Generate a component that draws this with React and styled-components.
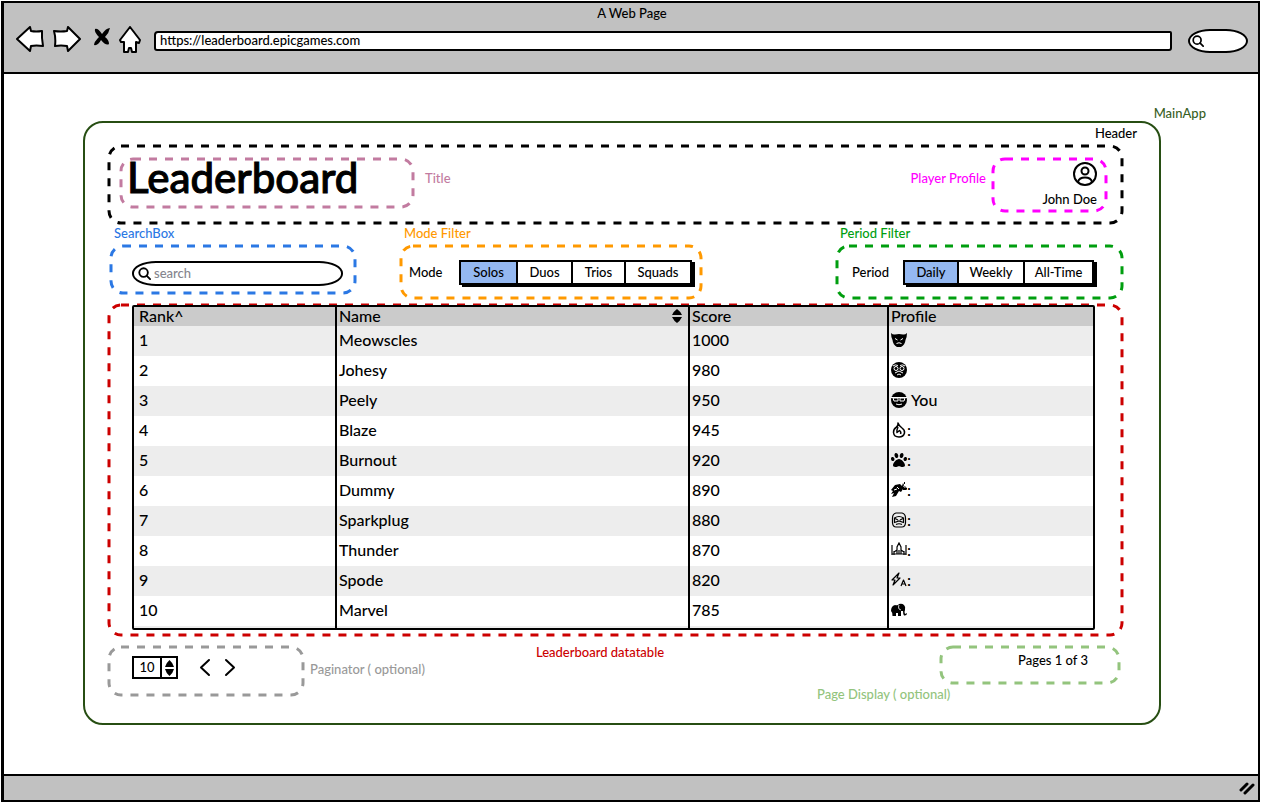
import React, { useState } from "react";
import styled, { createGlobalStyle } from "styled-components";
import { FaPaw } from "react-icons/fa";

const GlobalStyle = createGlobalStyle`
  *, *::before, *::after { box-sizing: border-box; }
  body {
    margin: 0;
    background: #fff;
    color: #000;
    font-family: Lato, "Liberation Sans", sans-serif;
    font-weight: 500;
    font-size: 13px;
    line-height: 16px;
  }
  button, input { font: inherit; color: inherit; }
  svg { display: block; }
`;

const Window = styled.div`
  display: flex;
  flex-direction: column;
  min-height: calc(100vh - 2px);
  margin: 1px 1px 0;
  border: 2px solid #000;
  border-left-width: 3px;
`;

const Chrome = styled.header`
  background: #c1c1c1;
  border-bottom: 2px solid #000;
  padding: 2px 10px 17px 12px;
`;

const PageTitle = styled.div`
  text-align: center;
  height: 16px;
`;

const NavRow = styled.nav`
  display: flex;
  align-items: center;
  height: 32px;
  margin-top: 2px;
`;

const IconButton = styled.button`
  display: flex;
  flex: none;
  padding: 0;
  border: 0;
  background: none;
  margin-right: ${(p) => p.$gap || 0}px;
`;

const AddressBar = styled.input`
  flex: 1;
  min-width: 0;
  height: 20px;
  margin: 4px 16px 0 13px;
  padding: 0 4px 2px;
  border: 2px solid #000;
  border-radius: 4px 2px 3px 3px;
  background: #fff;
  outline: 0;
`;

const Pill = styled.label`
  display: flex;
  align-items: center;
  border: 2px solid #000;
  background: #fff;
`;

const BrowserSearch = styled(Pill)`
  width: 60px;
  height: 24px;
  margin-top: 4px;
  padding-left: 2px;
  border-radius: 22px / 12px;
`;

const SearchField = styled(Pill)`
  height: 25px;
  padding-left: 4px;
  border-radius: 24px / 12px;
`;

const BareInput = styled.input`
  flex: 1;
  min-width: 0;
  width: 100%;
  padding: 0 0 2px 3px;
  border: 0;
  background: none;
  outline: 0;
  &::placeholder { color: #85858d; opacity: 1; }
`;

const Body = styled.main`
  flex: 1;
  padding: 31px 52px 32px 79px;
`;

const Note = styled.div`
  color: ${(p) => p.$color || "#000"};
  white-space: nowrap;
`;

const MainNote = styled(Note)`
  text-align: right;
`;

const AppPanel = styled.section`
  margin-right: 45px;
  border: 2px solid #274e13;
  border-radius: 20px;
  padding: 2px 0 21px;
`;

const HeaderNote = styled(Note)`
  text-align: right;
  padding-right: 22px;
`;

const Content = styled.div`
  padding: 5px 37px 0 24px;
`;

const Frame = styled.div`
  position: relative;
`;

const Outline = styled.svg`
  position: absolute;
  inset: 0;
  width: 100%;
  height: 100%;
  overflow: visible;
  pointer-events: none;
`;

function Dashes({ color }) {
  return (
    <Outline aria-hidden="true">
      <rect width="100%" height="100%" rx="12" fill="none" stroke={color} strokeWidth="3" strokeDasharray="8 8" />
    </Outline>
  );
}

const HeaderFrame = styled(Frame)`
  display: flex;
  align-items: flex-start;
  padding: 13px 16px 12px 12px;
`;

const TitleFrame = styled(Frame)`
  width: 292px;
  height: 48px;
  padding-left: 6px;
  margin-right: 12px;
`;

const Title = styled.h1`
  margin: 0;
  font-size: 42px;
  line-height: 36px;
  font-weight: 500;
  -webkit-text-stroke: 1px #000;
`;

const HeaderCaption = styled(Note)`
  margin-top: 11px;
  margin-left: ${(p) => (p.$end ? "auto" : "0")};
  margin-right: ${(p) => (p.$end ? "7px" : "0")};
`;

const ProfileFrame = styled(Frame)`
  display: flex;
  flex-direction: column;
  align-items: flex-end;
  gap: 5px;
  width: 113px;
  height: 52px;
  padding: 3px 9px 0 0;
`;

const FilterRow = styled.div`
  display: flex;
  align-items: flex-start;
  padding: 2px 0 7px 2px;
`;

const FilterSection = styled.section`
  display: flex;
  flex-direction: column;
  gap: 5px;
  width: ${(p) => p.$width}px;
  margin-left: ${(p) => p.$left || "0"};
`;

const FilterCaption = styled(Note)`
  padding-left: 3px;
`;

const FilterFrame = styled(Frame)`
  display: flex;
  align-items: flex-start;
  height: ${(p) => p.$height}px;
  padding: 14px ${(p) => p.$right}px 0 ${(p) => p.$left}px;
`;

const SearchFrame = styled(Frame)`
  height: 47px;
  padding: 15px 12px 0 21px;
`;

const FilterLabel = styled.span`
  flex: 1;
  padding-top: 4px;
`;

const Segments = styled.div`
  display: flex;
  border: 2px solid #000;
  background: #fff;
  box-shadow: 3px 2px 0 #000;
`;

const Segment = styled.button`
  height: 21px;
  width: ${(p) => p.$width}px;
  padding: 0 0 2px;
  border: 0;
  border-left: ${(p) => (p.$first ? "0" : "2px solid #000")};
  background: ${(p) => (p.$active ? "#94b8f1" : "#fff")};
`;

const TableFrame = styled(Frame)`
  padding: 0 27px 5px 23px;
`;

const TableBorder = styled.div`
  position: relative;
  border: 2px solid #000;
  border-radius: 2px;
  background: #fff;
`;

const Table = styled.table`
  width: 100%;
  table-layout: fixed;
  border-collapse: separate;
  border-spacing: 0;
  font-size: 16px;
`;

const Column = styled.col`
  width: ${(p) => (p.$width ? `${p.$width}px` : "auto")};
`;

const HeadCell = styled.th`
  height: 19px;
  padding: 0 6px 2px ${(p) => (p.$first ? 5 : 2)}px;
  border-right: ${(p) => (p.$last ? "0" : "2px solid #000")};
  background: #cbcbcb;
  text-align: left;
  font-weight: 500;
  line-height: 17px;
`;

const HeadContent = styled.div`
  display: flex;
  align-items: center;
  justify-content: space-between;
`;

const Row = styled.tr`
  background: ${(p) => (p.$striped ? "#ededed" : "#fff")};
`;

const Cell = styled.td`
  height: 30px;
  padding: 0 0 2px ${(p) => (p.$first ? 5 : 2)}px;
  border-right: ${(p) => (p.$last ? "0" : "2px solid #000")};
`;

const Spacer = styled.td`
  height: 2px;
  padding: 0;
  border-right: ${(p) => (p.$last ? "0" : "2px solid #000")};
`;

const ProfileValue = styled.span`
  display: flex;
  align-items: center;
  gap: ${(p) => (p.$spaced ? 4 : 0)}px;
`;

const Footer = styled.footer`
  display: flex;
  align-items: flex-start;
  padding-top: 9px;
`;

const PaginatorFrame = styled(Frame)`
  display: flex;
  align-items: flex-start;
  width: 194px;
  height: 48px;
  margin: 3px 7px 0 0;
  padding: 9px 0 0 23px;
`;

const Stepper = styled.div`
  display: flex;
  width: 46px;
  height: 23px;
  margin-right: 21px;
  border: 2px solid #000;
`;

const StepperInput = styled.input`
  width: 28px;
  padding: 0 0 1px;
  border: 0;
  border-right: 2px solid #000;
  text-align: center;
  outline: 0;
`;

const StepperButtons = styled.div`
  display: flex;
  flex: 1;
  flex-direction: column;
  align-items: center;
  justify-content: center;
  gap: 2px;
`;

const Pager = styled.div`
  display: flex;
  gap: 13px;
  padding-top: 2px;
`;

const PaginatorNote = styled(Note)`
  margin-top: 17px;
`;

const TableNote = styled(Note)`
  margin-left: 111px;
`;

const PageDisplay = styled.section`
  display: flex;
  flex-direction: column;
  align-items: flex-end;
  gap: 3px;
  width: 302px;
  margin: 3px 3px 0 auto;
`;

const PageFrame = styled(Frame)`
  width: 178px;
  height: 36px;
  padding: 5px 31px 0 0;
  text-align: right;
`;

const PageNote = styled(Note)`
  align-self: flex-start;
`;

const StatusBar = styled.div`
  display: flex;
  justify-content: flex-end;
  align-items: center;
  height: 26px;
  padding-right: 3px;
  border-top: 2px solid #000;
  background: #c1c1c1;
`;

const sketch = { stroke: "#000", strokeWidth: 2, strokeLinejoin: "round", strokeLinecap: "round" };

const BackArrow = () => (
  <svg width="28" height="26" viewBox="0 0 28 26" fill="#fff" {...sketch}>
    <path d="M1 13 14 1 15 5Q20 6 26 5L26 12 27 20Q20 19 15 20L14 25Z" />
  </svg>
);
const ForwardArrow = () => (
  <svg width="28" height="26" viewBox="0 0 28 26" fill="#fff" {...sketch}>
    <path d="M1 5Q8 6 14 5L15 1 27 13 15 25 14 20Q8 19 2 20 3 12 1 5Z" />
  </svg>
);
const StopCross = () => (
  <svg width="18" height="24" viewBox="0 0 18 24" fill="#000">
    <path d="M2 2Q5 1 9 7 13 1 17 1 16 6 12 10 16 13 16 17 13 19 8 13 5 19 1 18 1 15 6 10 1 5 2 2Z" />
  </svg>
);
const Home = () => (
  <svg width="22" height="27" viewBox="0 0 22 27" fill="#fff" {...sketch}>
    <path d="M11 1 21 14 20 17 17 16 17 26H13L12 22H10L9 26H5L5 16 2 16 1 14Z" />
  </svg>
);
const Magnifier = ({ size = 13 }) => (
  <svg width={size} height={size} viewBox="0 0 14 14" fill="none" stroke="#000" strokeWidth="2" strokeLinecap="round">
    <circle cx="6" cy="6" r="4.6" />
    <path d="M9.500 9.500 13 13" />
  </svg>
);
const Avatar = () => (
  <svg width="24" height="24" viewBox="0 0 24 24" fill="none" stroke="#000" strokeWidth="2">
    <circle cx="12" cy="12" r="11" />
    <circle cx="12" cy="9" r="3.500" />
    <path d="M5 20q1-4.500 7-4.500t7 4.500" />
  </svg>
);
const SortArrows = () => (
  <svg width="10" height="14" viewBox="0 0 10 14">
    <path d="M5 0q3 2 5 6H0q2-4 5-6ZM5 14q3-2 5-6H0q2 4 5 6Z" />
  </svg>
);
const StepArrow = ({ down }) => (
  <svg width="9" height="7" viewBox="0 0 9 7">
    <path d={down ? "M0 0h9q-1 4-4.500 7Q1 4 0 0Z" : "M0 7h9q-1-4-4.500-7Q1 3 0 7Z"} />
  </svg>
);
const Chevron = ({ right }) => (
  <svg width="12" height="19" viewBox="0 0 12 19" fill="none" {...sketch}>
    <path d={right ? "M2 2 10 9.500 2 17" : "M10 2 2 9.500 10 17"} />
  </svg>
);
const Grip = () => (
  <svg width="16" height="14" viewBox="0 0 16 14" fill="none" stroke="#000" strokeWidth="3" strokeLinecap="round">
    <path d="M2 9 8 3M6 12 14 4" />
  </svg>
);

const Glyph = styled.svg`
  flex: none;
  width: 16px;
  height: 16px;
`;

const Devil = () => (
  <Glyph viewBox="0 0 16 16">
    <path d="M0 1Q2 3 4 2.500 8 1.500 12 2.500 14 3 16 1 16 5 14.500 8 14 13 10 15H6Q2 13 1.500 8 0 5 0 1Z" />
    <path d="M4 6.500 6.500 8M12 6.500 9.500 8M5.500 11.500q2.500-1.500 5 0" fill="none" stroke="#fff" strokeWidth="1" />
  </Glyph>
);
const Surprised = () => (
  <Glyph viewBox="0 0 16 16">
    <circle cx="8" cy="8" r="8" />
    <g fill="none" stroke="#fff">
      <circle cx="5" cy="6.500" r="2" />
      <circle cx="11" cy="6.500" r="2" />
      <path d="M2 4q2-2 5-.5M14 4q-2-2-5-.5M4 11l4-2 4 2M6 13q2-2 4 0" />
    </g>
  </Glyph>
);
const Glasses = () => (
  <Glyph viewBox="0 0 16 16">
    <circle cx="8" cy="8" r="8" />
    <g fill="none" stroke="#fff">
      <path d="M0 5.500h16M2 6h5v3H3ZM9 6h5l-1 3H9ZM5 12q3 1.500 6 0" />
    </g>
  </Glyph>
);
const Flame = () => (
  <Glyph viewBox="0 0 16 16" fill="none" stroke="#000" strokeWidth="1.500" strokeLinejoin="round">
    <path d="M7 1Q8 4 11 6 14 8 13.500 11 12.500 15 8 15 3 15 2.500 10.500 2.500 7 5 5.500 7.500 4 7 1Z" />
    <path d="M7 5Q5.500 8 6 10.500L8.500 8.500Q10.500 10 9.500 12" />
  </Glyph>
);
const Strike = () => (
  <Glyph viewBox="0 0 16 16">
    <path d="M0 8 4 3l5-1 2 2 1-3 1 2-1 2 3-1-3 3-2 3-2-1-3 5-4 1 2-4-3 1 2-3Z" />
    <path d="M12 7h3M13 1l1 0M14 6l2 1" fill="none" stroke="#000" strokeWidth="2" />
    <path d="m3 8 3-1M6 5l2 2" stroke="#fff" />
  </Glyph>
);
const MaskFace = () => (
  <Glyph viewBox="0 0 16 16" fill="none" stroke="#000" strokeWidth="1.200">
    <path d="M5 1h6Q14.500 2 14.500 6V11Q14 15 11 15H5Q2 15 1.500 11V6Q1.500 2 5 1Z" />
    <path d="M3.500 6Q8 3 12.500 6V10.500L8 9 3.500 10.500ZM4 6.500 7 8M12 6.500 9 8M5 12.500q3-1.500 6 0" />
  </Glyph>
);
const Towers = () => (
  <Glyph viewBox="0 0 16 16" fill="none" stroke="#000" strokeWidth="1.200">
    <path d="M1 3V13M3 9V13M15 3V13M13 9V13M6 12V5L8 1 10 5V12M1 12H15M3 10 6 8M13 10 10 8M8 8V12" />
  </Glyph>
);
const AutoFlash = () => (
  <Glyph viewBox="0 0 16 16" fill="none" stroke="#000" strokeWidth="1.200" strokeLinejoin="round">
    <path d="M8 1 1 8H4L2 13 9 6H6ZM10 14l2.500-6L15 14M11 12h3" />
  </Glyph>
);
const Elephant = () => (
  <Glyph viewBox="0 0 16 16">
    <path d="M4 3Q7 4 8 2 11 1 13 3 15 5 14 8 13 10 14 12L16 11Q16 14 13 13.500 12 12 12 9L10 9V14H7V11H5V14H1.500Q2 11 0 9 0 4 4 3Z" />
    <path d="M8 3Q7 5 8 7L10 8" fill="none" stroke="#fff" strokeWidth="0.800" />
  </Glyph>
);

const PLAYERS = [
  ["Meowscles", 1000, Devil, ""],
  ["Johesy", 980, Surprised, ""],
  ["Peely", 950, Glasses, "You"],
  ["Blaze", 945, Flame, ":"],
  ["Burnout", 920, FaPaw, ":"],
  ["Dummy", 890, Strike, ":"],
  ["Sparkplug", 880, MaskFace, ":"],
  ["Thunder", 870, Towers, ":"],
  ["Spode", 820, AutoFlash, ":"],
  ["Marvel", 785, Elephant, ""],
];

const MODES = [["Solos", 55], ["Duos", 55], ["Trios", 53], ["Squads", 66]];
const PERIODS = [["Daily", 52], ["Weekly", 66], ["All-Time", 69]];

function SegmentedControl({ label, options }) {
  const [active, setActive] = useState(options[0][0]);
  return (
    <Segments role="group" aria-label={label}>
      {options.map(([name, width], i) => (
        <Segment
          key={name}
          type="button"
          $width={width}
          $first={i === 0}
          $active={name === active}
          aria-pressed={name === active}
          onClick={() => setActive(name)}
        >
          {name}
        </Segment>
      ))}
    </Segments>
  );
}

export default function App() {
  const [pageSize, setPageSize] = useState(10);
  return (
    <>
      <GlobalStyle />
      <Window>
        <Chrome>
          <PageTitle>A Web Page</PageTitle>
          <NavRow aria-label="Browser">
            <IconButton type="button" aria-label="Back" $gap={9}><BackArrow /></IconButton>
            <IconButton type="button" aria-label="Forward" $gap={12}><ForwardArrow /></IconButton>
            <IconButton type="button" aria-label="Stop" $gap={8}><StopCross /></IconButton>
            <IconButton type="button" aria-label="Home"><Home /></IconButton>
            <AddressBar aria-label="Address" defaultValue="https://leaderboard.epicgames.com" />
            <BrowserSearch>
              <Magnifier size={12} />
              <BareInput type="text" aria-label="Search the web" />
            </BrowserSearch>
          </NavRow>
        </Chrome>

        <Body>
          <MainNote $color="#38601f">MainApp</MainNote>
          <AppPanel>
            <HeaderNote>Header</HeaderNote>
            <Content>
              <HeaderFrame>
                <Dashes color="#000" />
                <TitleFrame>
                  <Dashes color="#c27ba0" />
                  <Title>Leaderboard</Title>
                </TitleFrame>
                <HeaderCaption $color="#c27ba0">Title</HeaderCaption>
                <HeaderCaption $color="#ff00ff" $end>Player Profile</HeaderCaption>
                <ProfileFrame>
                  <Dashes color="#ff00ff" />
                  <Avatar />
                  <span>John Doe</span>
                </ProfileFrame>
              </HeaderFrame>

              <FilterRow>
                <FilterSection $width={244}>
                  <FilterCaption $color="#2b78e4">SearchBox</FilterCaption>
                  <SearchFrame>
                    <Dashes color="#2b78e4" />
                    <SearchField>
                      <Magnifier />
                      <BareInput type="text" placeholder="search" aria-label="Search players" />
                    </SearchField>
                  </SearchFrame>
                </FilterSection>
                <FilterSection $width={300} $left="46px">
                  <FilterCaption $color="#ff9900">Mode Filter</FilterCaption>
                  <FilterFrame $height={52} $left={8} $right={9}>
                    <Dashes color="#ff9900" />
                    <FilterLabel>Mode</FilterLabel>
                    <SegmentedControl label="Mode" options={MODES} />
                  </FilterFrame>
                </FilterSection>
                <FilterSection $width={285} $left="auto">
                  <FilterCaption $color="#009e0f">Period Filter</FilterCaption>
                  <FilterFrame $height={52} $left={15} $right={28}>
                    <Dashes color="#009e0f" />
                    <FilterLabel>Period</FilterLabel>
                    <SegmentedControl label="Period" options={PERIODS} />
                  </FilterFrame>
                </FilterSection>
              </FilterRow>

              <TableFrame>
                <Dashes color="#cc0000" />
                <TableBorder>
                  <Table>
                    <colgroup>
                      <Column $width={203} />
                      <Column />
                      <Column $width={199} />
                      <Column $width={204} />
                    </colgroup>
                    <thead>
                      <tr>
                        <HeadCell $first>Rank^</HeadCell>
                        <HeadCell>
                          <HeadContent>Name<SortArrows /></HeadContent>
                        </HeadCell>
                        <HeadCell>Score</HeadCell>
                        <HeadCell $last>Profile</HeadCell>
                      </tr>
                    </thead>
                    <tbody>
                      {PLAYERS.map(([name, score, Icon, note], i) => (
                        <Row key={name} $striped={i % 2 === 0}>
                          <Cell $first>{i + 1}</Cell>
                          <Cell>{name}</Cell>
                          <Cell>{score}</Cell>
                          <Cell $last>
                            <ProfileValue $spaced={note === "You"}>
                              <Icon />
                              {note}
                            </ProfileValue>
                          </Cell>
                        </Row>
                      ))}
                      <Row $striped aria-hidden="true">
                        <Spacer /><Spacer /><Spacer /><Spacer $last />
                      </Row>
                    </tbody>
                  </Table>
                </TableBorder>
              </TableFrame>

              <Footer>
                <PaginatorFrame>
                  <Dashes color="#999" />
                  <Stepper>
                    <StepperInput
                      type="text"
                      inputMode="numeric"
                      aria-label="Rows per page"
                      value={pageSize}
                      onChange={(e) => setPageSize(Number(e.target.value) || 0)}
                    />
                    <StepperButtons>
                      <IconButton type="button" aria-label="More rows" onClick={() => setPageSize(pageSize + 1)}>
                        <StepArrow />
                      </IconButton>
                      <IconButton type="button" aria-label="Fewer rows" onClick={() => setPageSize(Math.max(1, pageSize - 1))}>
                        <StepArrow down />
                      </IconButton>
                    </StepperButtons>
                  </Stepper>
                  <Pager>
                    <IconButton type="button" aria-label="Previous page"><Chevron /></IconButton>
                    <IconButton type="button" aria-label="Next page"><Chevron right /></IconButton>
                  </Pager>
                </PaginatorFrame>
                <PaginatorNote $color="#999">Paginator ( optional)</PaginatorNote>
                <TableNote $color="#cc0000">Leaderboard datatable</TableNote>
                <PageDisplay>
                  <PageFrame>
                    <Dashes color="#93c47d" />
                    Pages 1 of 3
                  </PageFrame>
                  <PageNote $color="#93c47d">Page Display ( optional)</PageNote>
                </PageDisplay>
              </Footer>
            </Content>
          </AppPanel>
        </Body>
        <StatusBar><Grip /></StatusBar>
      </Window>
    </>
  );
}
